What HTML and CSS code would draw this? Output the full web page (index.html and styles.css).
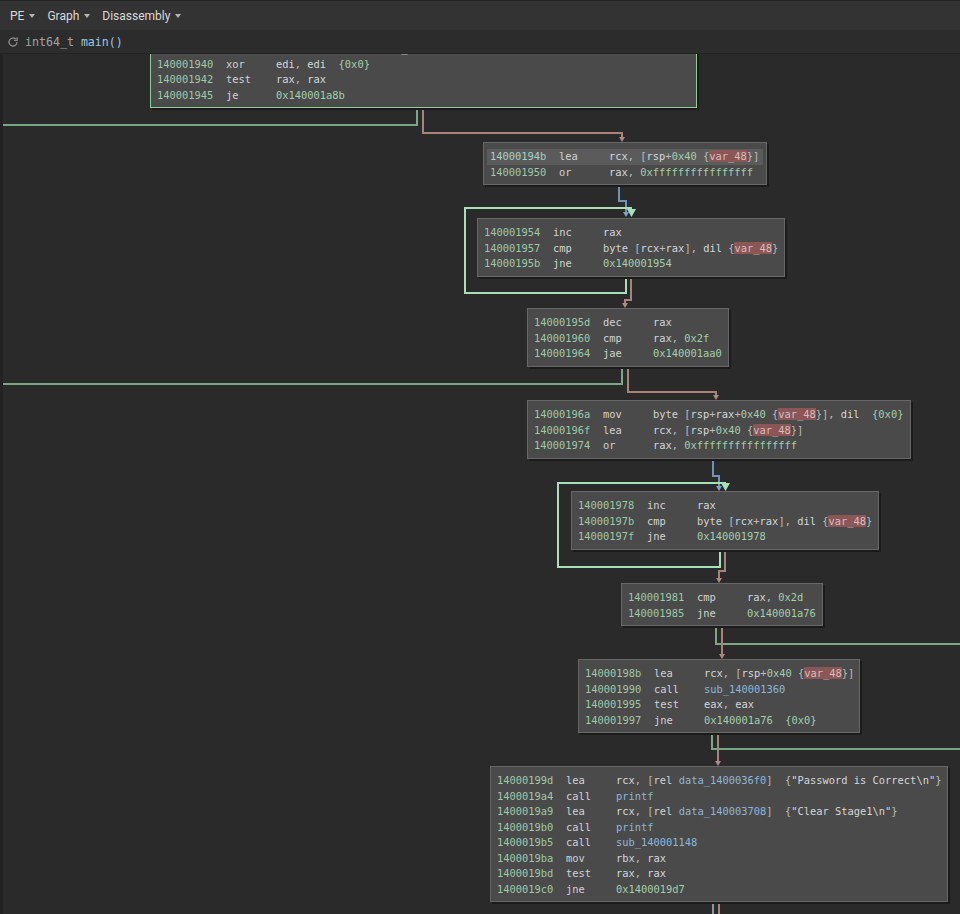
FILE: index.html
```html
<!DOCTYPE html>
<html>
<head>
<meta charset="utf-8">
<title>Graph - main</title>
<link rel="stylesheet" href="styles.css">
</head>
<body>
<div class="app">
  <div class="toolbar">
    <div class="menu">PE<span class="caret"></span></div>
    <div class="menu">Graph<span class="caret"></span></div>
    <div class="menu">Disassembly<span class="caret"></span></div>
  </div>
  <div class="funcbar">
    <svg class="refresh" width="12" height="12" viewBox="0 0 12 12"><path d="M10 6a4 4 0 1 1-1.2-2.85" fill="none" stroke="#8a8a8a" stroke-width="1.3"/><path d="M10.2 1.2v3.2H7" fill="none" stroke="#8a8a8a" stroke-width="1.3"/></svg>
    <span class="type">int64_t</span><span class="fname">main()</span>
  </div>
  <div class="viewport">
    <div class="canvas">
      <svg class="edges" width="960" height="914" viewBox="0 0 960 914">
        <rect x="0" y="54" width="3" height="860" fill="#222222"/>
        <g fill="none" stroke-width="2">
          <path class="e-true" d="M417 108 V125 H3"/>
          <path class="e-true" d="M622 368 V384 H3"/>
          <path class="e-true" d="M716 627 V644 H960"/>
          <path class="e-true" d="M712 734 V749 H960"/>
          <path class="e-out" d="M713 902 V914"/>
          <path class="e-false" d="M423 108 V133 H622 V138"/>
          <path class="e-false" d="M631 276 V300 H625 V304"/>
          <path class="e-false" d="M628 368 V392 H716 V396"/>
          <path class="e-false" d="M725 551 V571 H719 V579"/>
          <path class="e-false" d="M722 627 V655"/>
          <path class="e-false" d="M718 734 V762"/>
          <path class="e-false" d="M719 902 V914"/>
          <path class="e-jump" d="M619 184 V201 H626 V213"/>
          <path class="e-jump" d="M713 459 V476 H719 V486"/>
          <path class="e-loop" d="M626 276 V293 H465 V208 H631 V211"/>
          <path class="e-loop" d="M720 551 V567 H558 V483 H725 V485"/>
        </g>
        <polygon class="a-false" points="619,137 625,137 622,142"/>
        <polygon class="a-false" points="622,303 628,303 625,308"/>
        <polygon class="a-false" points="713,395 719,395 716,400"/>
        <polygon class="a-false" points="716,578 722,578 719,583"/>
        <polygon class="a-false" points="719,654 725,654 722,659"/>
        <polygon class="a-false" points="715,761 721,761 718,766"/>
        <polygon class="a-jump" points="623,212 629,212 626,217"/>
        <polygon class="a-jump" points="716,486 722,486 719,491"/>
        <polygon class="a-loop" points="627,209 636,209 631.5,217"/>
        <polygon class="a-loop" points="721,483 730,483 725.5,491"/>
      </svg>

      <div class="node n1 entry">
        <div class="row"><span class="a">140001939</span><span class="m">mov</span><span class="o"><span class="k">qword</span> <span class="p">[</span><span class="r">rsp</span><span class="p">+</span><span class="n">0x50</span> <span class="p">{</span><span class="r">var_28</span><span class="p">}],</span> <span class="r">rax</span></span></div>
        <div class="row"><span class="a">140001940</span><span class="m">xor</span><span class="o"><span class="r">edi</span><span class="p">,</span> <span class="r">edi</span>  <span class="n">{0x0}</span></span></div>
        <div class="row"><span class="a">140001942</span><span class="m">test</span><span class="o"><span class="r">rax</span><span class="p">,</span> <span class="r">rax</span></span></div>
        <div class="row"><span class="a">140001945</span><span class="m">je</span><span class="o"><span class="n">0x140001a8b</span></span></div>
      </div>

      <div class="node n2">
        <div class="row sel"><span class="a">14000194b</span><span class="m">lea</span><span class="o"><span class="r">rcx</span><span class="p">,</span> <span class="p">[</span><span class="r">rsp</span><span class="p">+</span><span class="n">0x40</span> <span class="p">{</span><span class="v">var_48</span><span class="p">}]</span></span></div>
        <div class="row"><span class="a">140001950</span><span class="m">or</span><span class="o"><span class="r">rax</span><span class="p">,</span> <span class="n">0xffffffffffffffff</span></span></div>
      </div>

      <div class="node n3">
        <div class="row"><span class="a">140001954</span><span class="m">inc</span><span class="o"><span class="r">rax</span></span></div>
        <div class="row"><span class="a">140001957</span><span class="m">cmp</span><span class="o"><span class="k">byte</span> <span class="p">[</span><span class="r">rcx</span><span class="p">+</span><span class="r">rax</span><span class="p">],</span> <span class="r">dil</span> <span class="p">{</span><span class="v">var_48</span><span class="p">}</span></span></div>
        <div class="row"><span class="a">14000195b</span><span class="m">jne</span><span class="o"><span class="n">0x140001954</span></span></div>
      </div>

      <div class="node n4">
        <div class="row"><span class="a">14000195d</span><span class="m">dec</span><span class="o"><span class="r">rax</span></span></div>
        <div class="row"><span class="a">140001960</span><span class="m">cmp</span><span class="o"><span class="r">rax</span><span class="p">,</span> <span class="n">0x2f</span></span></div>
        <div class="row"><span class="a">140001964</span><span class="m">jae</span><span class="o"><span class="n">0x140001aa0</span></span></div>
      </div>

      <div class="node n5">
        <div class="row"><span class="a">14000196a</span><span class="m">mov</span><span class="o"><span class="k">byte</span> <span class="p">[</span><span class="r">rsp</span><span class="p">+</span><span class="r">rax</span><span class="p">+</span><span class="n">0x40</span> <span class="p">{</span><span class="v">var_48</span><span class="p">}],</span> <span class="r">dil</span>  <span class="n">{0x0}</span></span></div>
        <div class="row"><span class="a">14000196f</span><span class="m">lea</span><span class="o"><span class="r">rcx</span><span class="p">,</span> <span class="p">[</span><span class="r">rsp</span><span class="p">+</span><span class="n">0x40</span> <span class="p">{</span><span class="v">var_48</span><span class="p">}]</span></span></div>
        <div class="row"><span class="a">140001974</span><span class="m">or</span><span class="o"><span class="r">rax</span><span class="p">,</span> <span class="n">0xffffffffffffffff</span></span></div>
      </div>

      <div class="node n6">
        <div class="row"><span class="a">140001978</span><span class="m">inc</span><span class="o"><span class="r">rax</span></span></div>
        <div class="row"><span class="a">14000197b</span><span class="m">cmp</span><span class="o"><span class="k">byte</span> <span class="p">[</span><span class="r">rcx</span><span class="p">+</span><span class="r">rax</span><span class="p">],</span> <span class="r">dil</span> <span class="p">{</span><span class="v">var_48</span><span class="p">}</span></span></div>
        <div class="row"><span class="a">14000197f</span><span class="m">jne</span><span class="o"><span class="n">0x140001978</span></span></div>
      </div>

      <div class="node n7">
        <div class="row"><span class="a">140001981</span><span class="m">cmp</span><span class="o"><span class="r">rax</span><span class="p">,</span> <span class="n">0x2d</span></span></div>
        <div class="row"><span class="a">140001985</span><span class="m">jne</span><span class="o"><span class="n">0x140001a76</span></span></div>
      </div>

      <div class="node n8">
        <div class="row"><span class="a">14000198b</span><span class="m">lea</span><span class="o"><span class="r">rcx</span><span class="p">,</span> <span class="p">[</span><span class="r">rsp</span><span class="p">+</span><span class="n">0x40</span> <span class="p">{</span><span class="v">var_48</span><span class="p">}]</span></span></div>
        <div class="row"><span class="a">140001990</span><span class="m">call</span><span class="o"><span class="s">sub_140001360</span></span></div>
        <div class="row"><span class="a">140001995</span><span class="m">test</span><span class="o"><span class="r">eax</span><span class="p">,</span> <span class="r">eax</span></span></div>
        <div class="row"><span class="a">140001997</span><span class="m">jne</span><span class="o"><span class="n">0x140001a76</span>  <span class="n">{0x0}</span></span></div>
      </div>

      <div class="node n9">
        <div class="row"><span class="a">14000199d</span><span class="m">lea</span><span class="o"><span class="r">rcx</span><span class="p">,</span> <span class="p">[</span><span class="k">rel</span> <span class="s">data_1400036f0</span><span class="p">]</span>  <span class="p">{</span><span class="str">"Password is Correct\n"</span><span class="p">}</span></span></div>
        <div class="row"><span class="a">1400019a4</span><span class="m">call</span><span class="o"><span class="s">printf</span></span></div>
        <div class="row"><span class="a">1400019a9</span><span class="m">lea</span><span class="o"><span class="r">rcx</span><span class="p">,</span> <span class="p">[</span><span class="k">rel</span> <span class="s">data_140003708</span><span class="p">]</span>  <span class="p">{</span><span class="str">"Clear Stage1\n"</span><span class="p">}</span></span></div>
        <div class="row"><span class="a">1400019b0</span><span class="m">call</span><span class="o"><span class="s">printf</span></span></div>
        <div class="row"><span class="a">1400019b5</span><span class="m">call</span><span class="o"><span class="s">sub_140001148</span></span></div>
        <div class="row"><span class="a">1400019ba</span><span class="m">mov</span><span class="o"><span class="r">rbx</span><span class="p">,</span> <span class="r">rax</span></span></div>
        <div class="row"><span class="a">1400019bd</span><span class="m">test</span><span class="o"><span class="r">rax</span><span class="p">,</span> <span class="r">rax</span></span></div>
        <div class="row"><span class="a">1400019c0</span><span class="m">jne</span><span class="o"><span class="n">0x1400019d7</span></span></div>
      </div>
    </div>
  </div>
</div>
</body>
</html>
```

FILE: styles.css
```css
html, body {
  margin: 0;
  padding: 0;
  background: #2a2a2a;
  overflow: hidden;
}

.app {
  width: 960px;
  height: 914px;
  display: flex;
  flex-direction: column;
}

.toolbar {
  height: 30px;
  box-sizing: border-box;
  border-top: 1px solid #252525;
  background: #333333;
  display: flex;
  align-items: center;
  padding-left: 10px;
  gap: 12px;
  font-family: Roboto, "Liberation Sans", sans-serif;
  font-size: 12px;
  color: #d9d9d9;
}

.menu {
  display: flex;
  align-items: center;
}

.caret {
  width: 0;
  height: 0;
  margin-left: 5px;
  margin-top: 1px;
  border-left: 3px solid transparent;
  border-right: 3px solid transparent;
  border-top: 4px solid #b5b5b5;
}

.funcbar {
  height: 24px;
  box-sizing: border-box;
  background: #2c2c2c;
  border-bottom: 1px solid #232323;
  display: flex;
  align-items: center;
  padding-left: 7px;
  font-family: "DejaVu Sans Mono", "Liberation Mono", monospace;
  font-size: 11.6px;
}

.refresh {
  margin-right: 6px;
}

.type {
  color: #a3a3a3;
  margin-right: 7px;
}

.fname {
  color: #9fc5e3;
}

.viewport {
  position: relative;
  flex: 1;
  overflow: hidden;
  background: #2a2a2a;
}

.canvas {
  position: absolute;
  left: 0;
  top: -54px;
  width: 960px;
  height: 914px;
}

.edges {
  position: absolute;
  left: 0;
  top: 0;
}

.e-true { stroke: #7aa887; }
.e-out { stroke: #8a9a90; }
.e-false { stroke: #a7837a; }
.e-jump { stroke: #6b94b8; }
.e-loop { stroke: #a6e0b4; }
.a-false { fill: #b08a80; }
.a-jump { fill: #7aa6cc; }
.a-loop { fill: #a6e0b4; }

.node {
  position: absolute;
  box-sizing: border-box;
  background: #4a4a4a;
  border: 1px solid #676767;
  box-shadow: 2px 2px 0 #1b1b1b;
  padding: 6px 6px 4px;
  font-family: "DejaVu Sans Mono", "Liberation Mono", monospace;
  font-size: 10.4px;
  line-height: 15.5px;
  color: #d4d4d4;
}

.node.entry {
  border-color: #8fcca0;
}

.row {
  display: flex;
  white-space: pre;
}

.row.sel {
  background: #5b5b5b;
  margin: 0 -3px;
  padding: 0 3px;
}

.row.sel .a {
  color: #a7d1c9;
}

.a {
  width: 69px;
  flex: none;
  color: #9fc9a7;
}

.m {
  width: 50px;
  flex: none;
  color: #d2d2d2;
}

.o { color: #d2d2d2; white-space: pre; }
.r { color: #d3d8dc; }
.k { color: #d2d2d2; }
.p { color: #bdbdbd; }
.n { color: #a3d0ad; }
.s { color: #8cb7dc; }
.str { color: #d6d6d6; }
.v {
  background: #8a5656;
  color: #d9bcbc;
}

.n1 { left: 150px; top: 34px; width: 547px; }
.n2 { left: 483px; top: 142px; width: 284px; }
.n3 { left: 477px; top: 218px; width: 308px; }
.n4 { left: 527px; top: 308px; width: 202px; }
.n5 { left: 527px; top: 400px; width: 384px; }
.n6 { left: 571px; top: 491px; width: 308px; }
.n7 { left: 621px; top: 583px; width: 202px; }
.n8 { left: 578px; top: 659px; width: 282px; }
.n9 { left: 490px; top: 766px; width: 458px; }
```
